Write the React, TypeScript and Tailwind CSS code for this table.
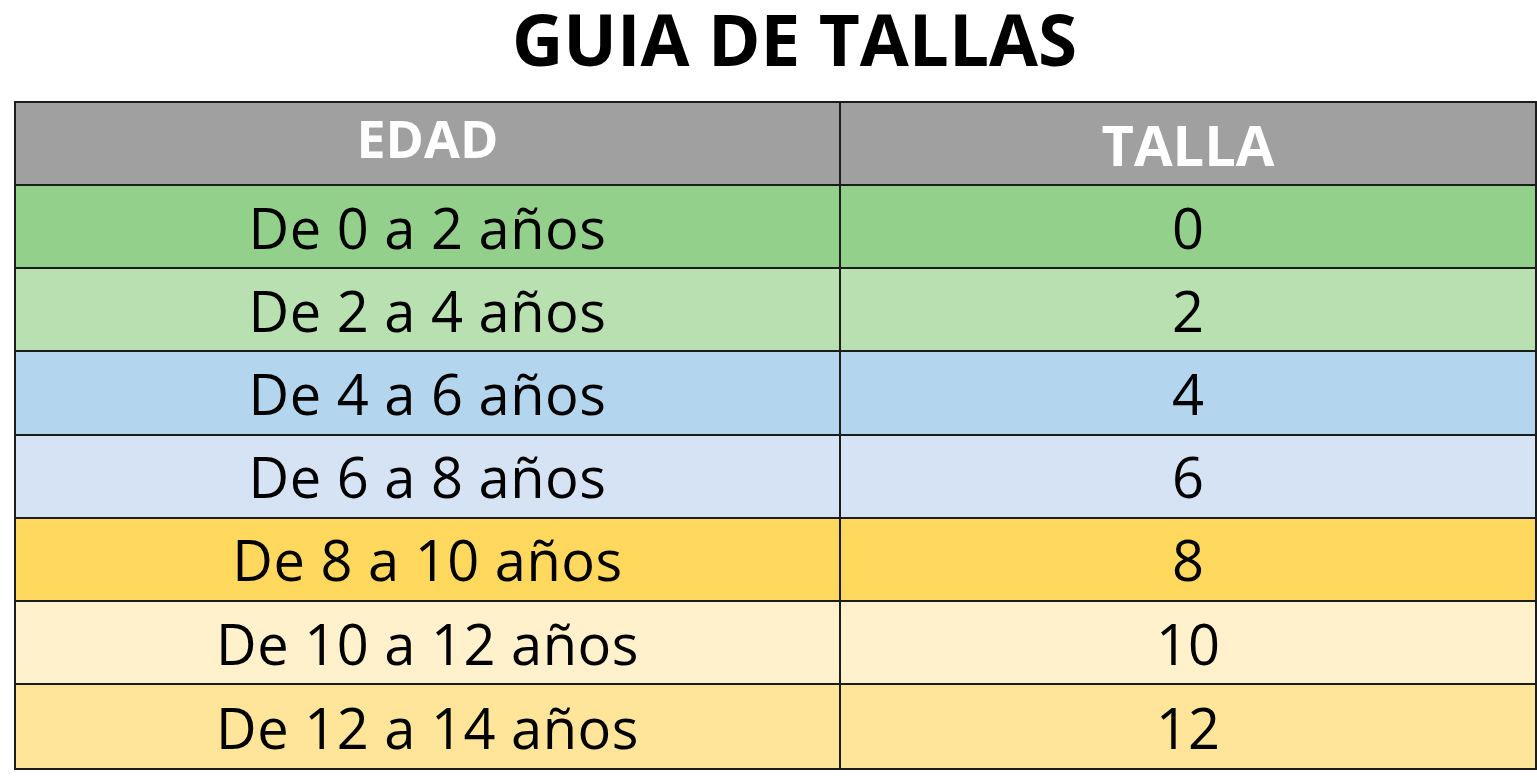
const rows = [
  { edad: 'De 0 a 2 años', talla: '0', bg: 'bg-[#93d08b]' },
  { edad: 'De 2 a 4 años', talla: '2', bg: 'bg-[#b9e0b1]' },
  { edad: 'De 4 a 6 años', talla: '4', bg: 'bg-[#b3d6ee]' },
  { edad: 'De 6 a 8 años', talla: '6', bg: 'bg-[#d6e3f4]' },
  { edad: 'De 8 a 10 años', talla: '8', bg: 'bg-[#ffd85d]' },
  { edad: 'De 10 a 12 años', talla: '10', bg: 'bg-[#fff1cb]' },
  { edad: 'De 12 a 14 años', talla: '12', bg: 'bg-[#fee59a]' },
];

export default function App() {
  return (
    <div className="w-[1537px] h-[778px] bg-white font-['Open_Sans',sans-serif] text-black overflow-hidden">
      {/* Title */}
      <div className="h-[101px] flex items-start justify-center pl-[52px]">
        <h1 className="text-[71px] font-bold leading-[1.1]">GUIA DE TALLAS</h1>
      </div>

      {/* Table */}
      <div className="ml-[14px] w-[1523px] border-2 border-[#1c1c1c] grid grid-cols-[825px_1fr]">
        <div className="h-[83px] bg-[#a0a0a0] border-r-2 border-b-2 border-[#1c1c1c] flex items-center justify-center">
          <span className="text-white font-bold text-[52px] leading-none -mt-[11px]">EDAD</span>
        </div>
        <div className="h-[83px] bg-[#a0a0a0] border-b-2 border-[#1c1c1c] flex items-center justify-center">
          <span className="text-white font-bold text-[56px] leading-none mt-[1px]">TALLA</span>
        </div>
        {rows.map((r, i) => (
          <div key={i} className="contents">
            <div
              className={`h-[83.2px] ${r.bg} border-r-2 ${i < rows.length - 1 ? 'border-b-2' : ''} border-[#1c1c1c] flex items-center justify-center`}
            >
              <span className="text-[56px] leading-none tracking-[0.5px]">{r.edad}</span>
            </div>
            <div
              className={`h-[83.2px] ${r.bg} ${i < rows.length - 1 ? 'border-b-2' : ''} border-[#1c1c1c] flex items-center justify-center`}
            >
              <span className="text-[56px] leading-none">{r.talla}</span>
            </div>
          </div>
        ))}
      </div>
    </div>
  );
}
